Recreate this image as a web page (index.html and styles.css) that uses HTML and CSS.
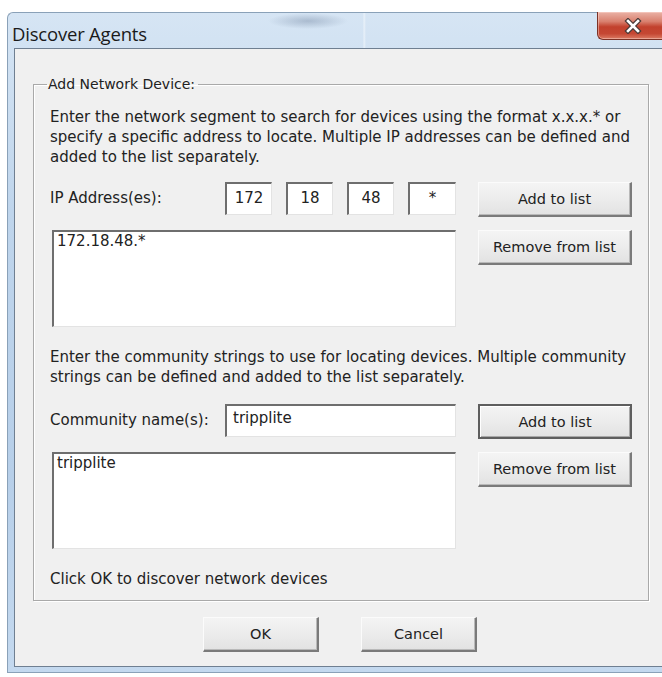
FILE: index.html
```html
<!DOCTYPE html>
<html lang="en">
<head>
<meta charset="utf-8">
<title>Discover Agents</title>
<link rel="stylesheet" href="styles.css">
</head>
<body>
<div class="window">
  <div class="titlebar">
    <span class="title">Discover Agents</span>
    <span class="close" aria-label="Close">
      <svg width="18" height="16" viewBox="0 0 18 16">
        <path d="M4 3 L14 13 M14 3 L4 13" stroke="#4a3a38" stroke-width="5" stroke-linecap="square"/>
        <path d="M4 3 L14 13 M14 3 L4 13" stroke="#ffffff" stroke-width="2.6" stroke-linecap="square"/>
      </svg>
    </span>
  </div>
  <div class="client">
    <fieldset class="group">
      <legend>Add Network Device:</legend>
      <p class="hint">Enter the network segment to search for devices using the format x.x.x.* or<br>specify a specific address to locate. Multiple IP addresses can be defined and<br>added to the list separately.</p>
      <div class="rows">
        <div class="field">
          <span class="label">IP Address(es):</span>
          <div class="octets">
            <span class="box octet">172</span>
            <span class="box octet">18</span>
            <span class="box octet">48</span>
            <span class="box octet wide">*</span>
          </div>
        </div>
        <button class="btn side">Add to list</button>
        <div class="box list">172.18.48.*</div>
        <button class="btn side">Remove from list</button>
      </div>
      <p class="hint second">Enter the community strings to use for locating devices. Multiple community<br>strings can be defined and added to the list separately.</p>
      <div class="rows">
        <div class="field">
          <span class="label">Community name(s):</span>
          <span class="box text">tripplite</span>
        </div>
        <button class="btn side default">Add to list</button>
        <div class="box list">tripplite</div>
        <button class="btn side">Remove from list</button>
      </div>
      <p class="footnote">Click OK to discover network devices</p>
    </fieldset>
    <div class="actions">
      <button class="btn action">OK</button>
      <button class="btn action">Cancel</button>
    </div>
  </div>
</div>
</body>
</html>
```

FILE: styles.css
```css
html, body {
  margin: 0;
  padding: 0;
  background: #ffffff;
  overflow: hidden;
}

body {
  width: 662px;
  height: 677px;
  font-family: "DejaVu Sans", Tahoma, sans-serif;
  font-size: 15px;
  color: #222222;
}

/* Aero-style window frame */
.window {
  margin: 12px 0 0 7px;
  width: 680px;
  height: 661px;
  box-sizing: border-box;
  border: 1px solid #8aa1b8;
  border-right: none;
  border-radius: 6px 0 0 0;
  background: linear-gradient(180deg, #d6e5f4 0%, #bfd5ec 30%, #b7cfe9 70%, #c4d9ef 100%);
  display: flex;
  flex-direction: column;
}

.titlebar {
  height: 35px;
  display: flex;
  align-items: flex-start;
  justify-content: space-between;
  background:
    radial-gradient(ellipse 40px 8px at 300px 8px, rgba(90, 110, 140, 0.35), transparent),
    linear-gradient(90deg, transparent 355px, rgba(255,255,255,0.5) 356px, transparent 358px);
}

.title {
  font-family: "Open Sans", "Noto Sans", sans-serif;
  font-size: 18.5px;
  color: #1a1a1a;
  margin: 8px 0 0 4px;
  letter-spacing: -0.2px;
}

/* Caption close button, partly running off the right edge */
.close {
  width: 90px;
  height: 28px;
  margin-top: -1px;
  box-sizing: border-box;
  border: 1px solid #7c3226;
  border-top: none;
  border-right: none;
  border-radius: 0 0 0 6px;
  background: linear-gradient(180deg, #eab2a6 0%, #d9816f 35%, #c2412d 55%, #c54733 80%, #db7a63 100%);
  box-shadow: inset 0 0 0 1px rgba(255, 220, 210, 0.45);
  display: flex;
  align-items: center;
  padding-left: 26px;
}

.client {
  margin: 0 0 5px 6px;
  flex: 1;
  border: 1px solid #6f7f91;
  border-right: none;
  background: #f0f0f0;
  padding: 26px 0 0 18px;
  display: flex;
  flex-direction: column;
}

/* Group box */
.group {
  width: 616px;
  box-sizing: border-box;
  margin: 0;
  border: 1px solid #a9a9a9;
  box-shadow: 1px 1px 0 #ffffff, inset 1px 1px 0 #ffffff;
  padding: 14px 12px 11px 16px;
}

.group legend {
  font-size: 14px;
  padding: 0 3px 0 1px;
  margin-left: -3px;
  line-height: 18px;
}

.hint {
  margin: 0;
  line-height: 20px;
  white-space: nowrap;
}

.hint.second {
  margin-top: 20px;
}

.rows {
  display: grid;
  grid-template-columns: 406px 154px;
  column-gap: 22px;
  row-gap: 13px;
  margin-top: 15px;
}

.hint.second + .rows {
  margin-top: 17px;
}

.field {
  display: flex;
  align-items: flex-start;
}

.label {
  width: 175px;
  flex: none;
  line-height: 33px;
}

.octets {
  display: flex;
  gap: 14px;
}

/* Sunken edit controls */
.box {
  background: #ffffff;
  box-sizing: border-box;
  border-style: solid;
  border-width: 2px 1px 1px 2px;
  border-color: #6e6e6e #e3e3e3 #e3e3e3 #6e6e6e;
}

.octet {
  width: 47px;
  height: 33px;
  display: flex;
  align-items: center;
  justify-content: center;
  padding-bottom: 3px;
}

.octet.wide {
  width: 48px;
}

.text {
  width: 231px;
  height: 33px;
  padding: 3px 0 0 6px;
}

.list {
  height: 97px;
  margin-left: 2px;
  width: 404px;
  padding: 0 0 0 3px;
  line-height: 18px;
}

/* Push buttons */
.btn {
  font-family: "DejaVu Sans", Tahoma, sans-serif;
  font-size: 14.5px;
  color: #222222;
  background: linear-gradient(180deg, #f4f4f4 0%, #ececec 50%, #e2e2e2 100%);
  border-style: solid;
  border-width: 1px 2px 2px 1px;
  border-color: #fbfbfb #7a7a7a #7a7a7a #fbfbfb;
  box-shadow: inset -1px -1px 0 #b9b9b9;
  padding: 0;
  margin: 0;
}

.side {
  width: 154px;
  height: 35px;
  align-self: start;
}

.default {
  border: 2px solid #5e5e5e;
  box-shadow: inset 1px 1px 0 #ffffff, inset -1px -1px 0 #a8a8a8;
}

.footnote {
  margin: 20px 0 0;
  line-height: 20px;
}

.actions {
  display: flex;
  gap: 42px;
  margin: 16px 0 0 170px;
}

.action {
  width: 116px;
  height: 35px;
}
```
